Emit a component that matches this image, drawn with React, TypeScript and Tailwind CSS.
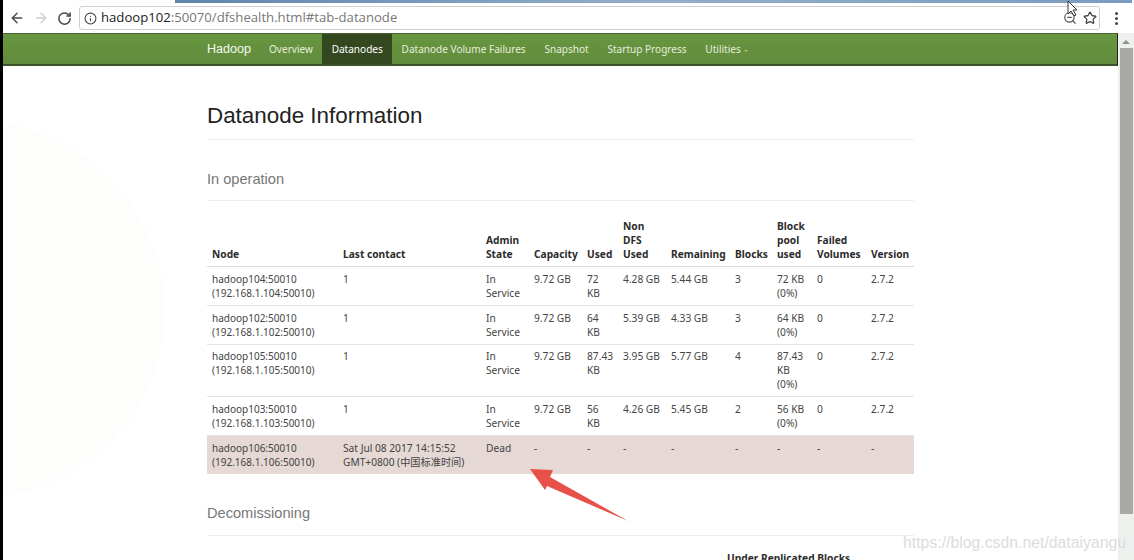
import { ArrowLeft, ArrowRight, RotateCw, Info, Star, ZoomOut } from 'lucide-react';

interface Row {
  node: string;
  addr: string;
  contact: React.ReactNode;
  state: React.ReactNode;
  capacity: string;
  used: React.ReactNode;
  nonDfs: string;
  remaining: string;
  blocks: string;
  pool: React.ReactNode;
  failed: string;
  version: string;
  dead?: boolean;
  tall?: boolean;
}

const inService = <>In<br />Service</>;

const rows: Row[] = [
  { node: 'hadoop104:50010', addr: '(192.168.1.104:50010)', contact: '1', state: inService, capacity: '9.72 GB', used: <>72<br />KB</>, nonDfs: '4.28 GB', remaining: '5.44 GB', blocks: '3', pool: <>72 KB<br />(0%)</>, failed: '0', version: '2.7.2' },
  { node: 'hadoop102:50010', addr: '(192.168.1.102:50010)', contact: '1', state: inService, capacity: '9.72 GB', used: <>64<br />KB</>, nonDfs: '5.39 GB', remaining: '4.33 GB', blocks: '3', pool: <>64 KB<br />(0%)</>, failed: '0', version: '2.7.2' },
  { node: 'hadoop105:50010', addr: '(192.168.1.105:50010)', contact: '1', state: inService, capacity: '9.72 GB', used: <>87.43<br />KB</>, nonDfs: '3.95 GB', remaining: '5.77 GB', blocks: '4', pool: <>87.43<br />KB<br />(0%)</>, failed: '0', version: '2.7.2', tall: true },
  { node: 'hadoop103:50010', addr: '(192.168.1.103:50010)', contact: '1', state: inService, capacity: '9.72 GB', used: <>56<br />KB</>, nonDfs: '4.26 GB', remaining: '5.45 GB', blocks: '2', pool: <>56 KB<br />(0%)</>, failed: '0', version: '2.7.2' },
  { node: 'hadoop106:50010', addr: '(192.168.1.106:50010)', contact: <>Sat Jul 08 2017 14:15:52<br />GMT+0800 (中国标准时间)</>, state: 'Dead', capacity: '-', used: '-', nonDfs: '-', remaining: '-', blocks: '-', pool: '-', failed: '-', version: '-', dead: true },
];

const headers: React.ReactNode[] = [
  'Node',
  'Last contact',
  <>Admin<br />State</>,
  'Capacity',
  'Used',
  <>Non<br />DFS<br />Used</>,
  'Remaining',
  'Blocks',
  <>Block<br />pool<br />used</>,
  <>Failed<br />Volumes</>,
  'Version',
];

const navLinks = ['Overview', 'Datanodes', 'Datanode Volume Failures', 'Snapshot', 'Startup Progress', 'Utilities'];

const Toolbar = () => (
  <div className="flex h-[30px] items-center bg-white">
    <ArrowLeft className="ml-[6px] h-[16px] w-[16px] text-[#4a4a4a]" strokeWidth={2.2} />
    <ArrowRight className="ml-[8px] h-[16px] w-[16px] text-[#d0d0d0]" strokeWidth={2.2} />
    <RotateCw className="ml-[8px] h-[15px] w-[15px] text-[#4a4a4a]" strokeWidth={2.4} />
    <div className="ml-[7px] flex h-[24px] w-[1021px] items-center rounded-[3px] border border-[#cfcfcf] bg-white pl-[4px]">
      <Info className="h-[13px] w-[13px] text-[#444]" strokeWidth={2} />
      <span className="ml-[4px] font-['Open_Sans',sans-serif] text-[13.15px] text-[#777]">
        <span className="text-[#222]">hadoop102</span>:50070/dfshealth.html#tab-datanode
      </span>
      <ZoomOut className="ml-auto mr-[6px] h-[14px] w-[14px] text-[#555]" strokeWidth={2} />
      <Star className="mr-[2px] h-[14px] w-[14px] text-[#444]" strokeWidth={2.2} />
    </div>
    <div className="ml-[15px] flex flex-col gap-[2px]">
      <span className="h-[3px] w-[3px] rounded-full bg-[#444]" />
      <span className="h-[3px] w-[3px] rounded-full bg-[#444]" />
      <span className="h-[3px] w-[3px] rounded-full bg-[#444]" />
    </div>
  </div>
);

const Navbar = () => (
  <div className="flex h-[33px] items-stretch border-t border-b-2 border-r border-t-[#4b6336] border-b-[#3c5429] border-r-[#222] bg-gradient-to-b from-[#68963f] to-[#628c3d] pl-[204px]">
    <span className="flex items-center pt-[1px] font-['Liberation_Sans',sans-serif] text-[12.6px] text-[#f4f7ef]">Hadoop</span>
    <div className="ml-[8.5px] flex items-stretch font-['Noto_Sans',sans-serif] text-[10.05px] text-[#e6eedd]">
      {navLinks.map((link) => (
        <span
          key={link}
          className={`flex items-center px-[9.4px] pt-[1px] ${link === 'Datanodes' ? 'bg-[#34481f] text-white' : ''}`}
        >
          {link}
          {link === 'Utilities' && <span className="ml-[3px] mt-[2px] border-x-[2px] border-t-[2px] border-x-transparent border-t-[#a5bd8e]" />}
        </span>
      ))}
    </div>
  </div>
);

const DatanodeTable = () => (
  <table className="mt-[13px] w-[707px] table-fixed border-collapse font-['Noto_Sans','Noto_Sans_CJK_SC',sans-serif] text-[10.2px] leading-[14px] text-[#444]">
    <colgroup>
      <col className="w-[131px]" />
      <col className="w-[143px]" />
      <col className="w-[48px]" />
      <col className="w-[53px]" />
      <col className="w-[36px]" />
      <col className="w-[48px]" />
      <col className="w-[64px]" />
      <col className="w-[42px]" />
      <col className="w-[40px]" />
      <col className="w-[54px]" />
      <col className="w-[48px]" />
    </colgroup>
    <thead>
      <tr className="border-b border-[#dcdcdc]">
        {headers.map((h, i) => (
          <th key={i} className="whitespace-nowrap p-[5px] text-left align-bottom font-bold text-[#2b2b2b]">{h}</th>
        ))}
      </tr>
    </thead>
    <tbody>
      {rows.map((r) => {
        const pad = r.tall ? 'px-[5px] pt-[4px] pb-[5px]' : 'p-[5px]';
        return (
          <tr key={r.node} className={r.dead ? 'bg-[#e5d8d5]' : 'border-b border-[#e4e4e4]'}>
            <td className={`whitespace-nowrap align-top text-[10px] ${pad}`}>{r.node}<br />{r.addr}</td>
            <td className={`whitespace-nowrap align-top ${pad}`}>{r.contact}</td>
            <td className={`align-top ${pad}`}>{r.state}</td>
            <td className={`whitespace-nowrap align-top ${pad}`}>{r.capacity}</td>
            <td className={`align-top ${pad}`}>{r.used}</td>
            <td className={`whitespace-nowrap align-top ${pad}`}>{r.nonDfs}</td>
            <td className={`whitespace-nowrap align-top ${pad}`}>{r.remaining}</td>
            <td className={`align-top ${pad}`}>{r.blocks}</td>
            <td className={`whitespace-nowrap align-top ${pad}`}>{r.pool}</td>
            <td className={`align-top ${pad}`}>{r.failed}</td>
            <td className={`align-top ${pad}`}>{r.version}</td>
          </tr>
        );
      })}
    </tbody>
  </table>
);

export default function App() {
  return (
    <div className="relative flex h-[560px] w-[1134px] overflow-hidden bg-white">
      <div className="relative z-10 w-[3px] shrink-0 bg-black" />
      <div className="flex min-w-0 flex-1 flex-col">
        <div className="flex h-[3px] pl-[172px]">
          <div className="h-[3px] w-[957px] bg-gradient-to-r from-[#5f85ad] via-[#93aecb] to-[#7a9cc0]" />
        </div>
        <Toolbar />
        <div className="flex min-h-0 flex-1">
          <div className="relative min-w-0 flex-1 overflow-hidden">
            <Navbar />
            <div className="absolute left-[-228px] top-[87px] h-[380px] w-[390px] rounded-[50%] bg-[#fdfefb]" />
            <main className="relative ml-[204px] w-[707px] font-['Liberation_Sans',sans-serif]">
              <h1 className="mt-[37px] border-b border-[#eeeeee] pb-[10px] text-[22.4px] leading-[26px] text-[#222]">Datanode Information</h1>
              <h3 className="mt-[30px] border-b border-[#eeeeee] pb-[12px] text-[14.6px] leading-[18px] text-[#777]">In operation</h3>
              <DatanodeTable />
              <h3 className="mt-[30px] border-b border-[#eeeeee] pb-[13px] text-[14.6px] leading-[18px] text-[#777]">Decomissioning</h3>
              <div className="mt-[15px] pl-[520px] font-['Noto_Sans',sans-serif] text-[10.2px] font-bold leading-[14px] whitespace-nowrap text-[#2b2b2b]">Under Replicated Blocks</div>
            </main>
          </div>
          {/* scrollbar */}
          <div className="flex w-[16px] shrink-0 flex-col items-center bg-[#eef0ee]">
            <span className="mt-[7px] border-x-[4px] border-b-[4px] border-x-transparent border-b-[#8f918f]" />
            <div className="mt-[4px] h-[466px] w-[13px] bg-[#a9aaa8]" />
          </div>
        </div>
      </div>

      {/* annotations on top of the capture */}
      <svg className="absolute left-0 top-0 h-[560px] w-[1134px]" viewBox="0 0 1134 560">
        <polygon points="530,469 553,470 550,477 628,521 547,486 545,490" fill="#e8504a" />
        <path d="M1068 1 L1068 14 L1071 11 L1074 16 L1076 15 L1073 10 L1077 10 Z" fill="#fff" stroke="#333" strokeWidth="1" />
      </svg>
      <span className="absolute left-[903px] top-[533px] font-['Liberation_Sans',sans-serif] text-[15.8px] leading-[20px] whitespace-nowrap text-[#dcdcdc]">https://blog.csdn.net/dataiyangu</span>
    </div>
  );
}
